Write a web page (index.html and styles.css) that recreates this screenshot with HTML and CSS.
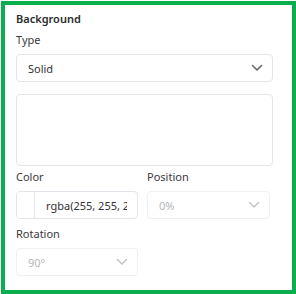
FILE: index.html
```html
<!DOCTYPE html>
<html lang="en">
<head>
    <meta charset="UTF-8">
    <meta name="viewport" content="width=device-width, initial-scale=1.0">
    <title>Background</title>
    <link rel="stylesheet" href="styles.css">
</head>
<body>
    <div class="panel">
        <h2>Background</h2>
        <div class="field">
            <label>Type</label>
            <div class="select">
                <span>Solid</span>
                <svg class="chev" width="12" height="8" viewBox="0 0 12 8"><path d="M1.5 1.5 6 6l4.5-4.5" fill="none" stroke="currentColor" stroke-width="1.6" stroke-linecap="round" stroke-linejoin="round"/></svg>
            </div>
        </div>
        <div class="preview"></div>
        <div class="row">
            <div class="field half">
                <label for="color">Color</label>
                <div class="color-input">
                    <span class="swatch"></span>
                    <input id="color" class="value" type="text" value="rgba(255, 255, 255, 1)" readonly>
                </div>
            </div>
            <div class="field half">
                <label>Position</label>
                <div class="select disabled">
                    <span>0%</span>
                    <svg class="chev" width="12" height="8" viewBox="0 0 12 8"><path d="M1.5 1.5 6 6l4.5-4.5" fill="none" stroke="currentColor" stroke-width="1.4" stroke-linecap="round" stroke-linejoin="round"/></svg>
                </div>
            </div>
        </div>
        <div class="field half">
            <label>Rotation</label>
            <div class="select disabled">
                <span>90°</span>
                <svg class="chev" width="12" height="8" viewBox="0 0 12 8"><path d="M1.5 1.5 6 6l4.5-4.5" fill="none" stroke="currentColor" stroke-width="1.4" stroke-linecap="round" stroke-linejoin="round"/></svg>
            </div>
        </div>
    </div>
</body>
</html>
```

FILE: styles.css
```css
body {
    margin: 0;
    font-family: "Noto Sans", sans-serif;
    background-color: #fff;
}
.panel {
    box-sizing: border-box;
    width: 295px;
    height: 293px;
    margin: 1px 0 0 1px;
    border: 4px solid #0aae4c;
    padding: 6px 19px 0 11px;
    color: #333;
}
h2 {
    font-size: 11px;
    font-weight: 600;
    margin: 0 0 5px 0;
    line-height: 16px;
    color: #2b2b2b;
}
.field {
    margin-bottom: 12px;
}
label {
    display: block;
    font-size: 11px;
    line-height: 16px;
    margin-bottom: 6px;
    color: #3a3a3a;
}
.select {
    box-sizing: border-box;
    height: 28px;
    border: 1px solid #e3e5ea;
    border-radius: 4px;
    display: flex;
    align-items: center;
    justify-content: space-between;
    padding: 0 9px 0 11px;
    font-size: 11px;
    color: #333;
}
.select .chev {
    color: #666;
}
.select.disabled {
    border-color: #eff0f2;
    color: #b5b5b5;
}
.select.disabled .chev {
    color: #c0c0c0;
}
.preview {
    box-sizing: border-box;
    height: 72px;
    border: 1px solid #e3e5ea;
    border-radius: 4px;
    margin-bottom: 3px;
}
.row {
    display: flex;
    gap: 9px;
}
.row .field {
    margin-bottom: 7px;
}
.half {
    width: 122px;
}
.row .half:last-child {
    width: 123px;
}
.color-input {
    box-sizing: border-box;
    height: 28px;
    border: 1px solid #e3e5ea;
    border-radius: 4px;
    display: flex;
    align-items: center;
    overflow: hidden;
}
.swatch {
    width: 17px;
    height: 100%;
    border-right: 1px solid #e3e5ea;
    background: #fff;
    flex-shrink: 0;
}
.value {
    flex: 1;
    min-width: 0;
    border: none;
    outline: none;
    background: transparent;
    font-family: inherit;
    font-size: 11px;
    color: #333;
    padding: 0 10px 0 11px;
    margin: 0;
}
```
